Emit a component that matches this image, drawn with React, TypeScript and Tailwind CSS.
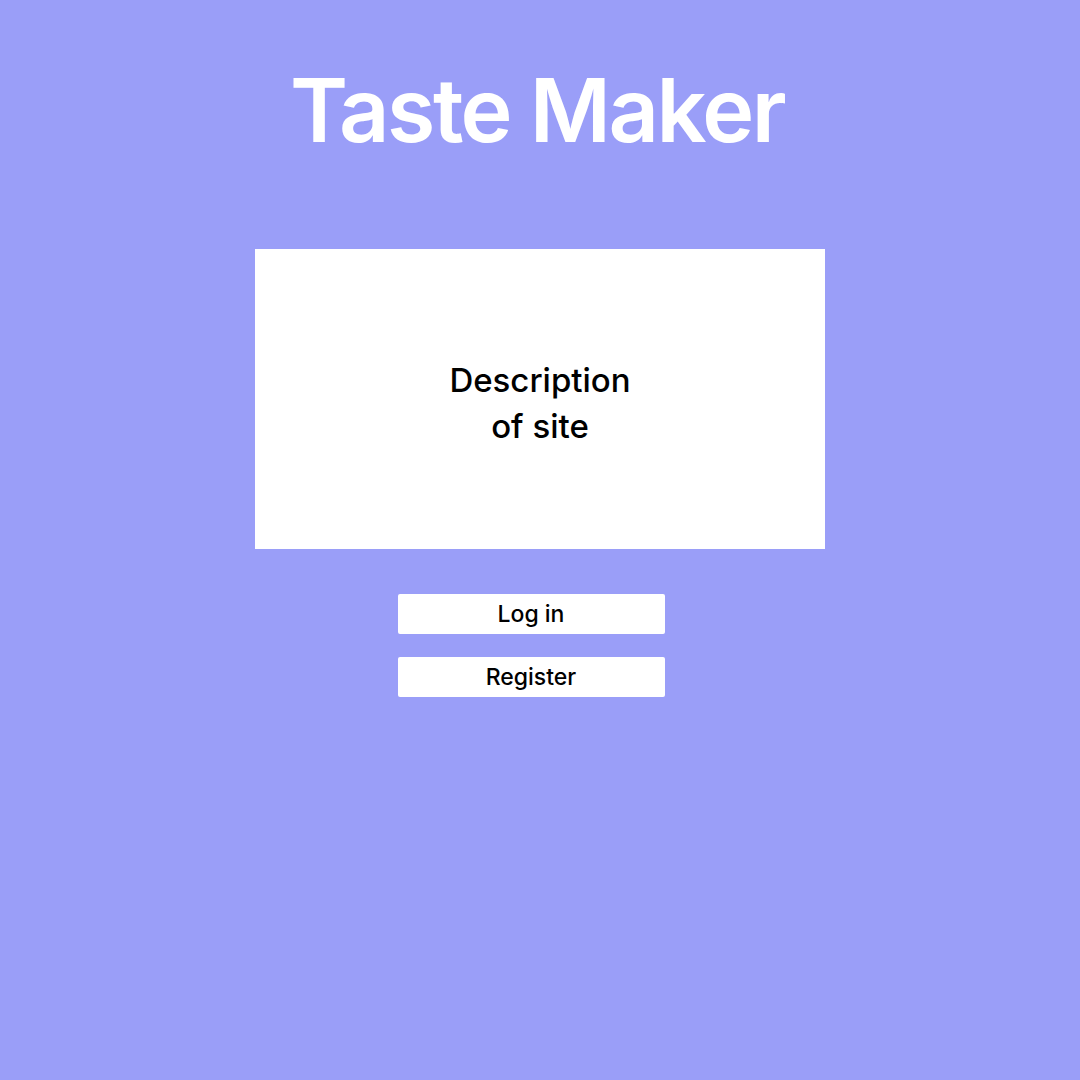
export default function App() {
  return (
    <div
      className="w-[1080px] h-[1080px] bg-[#9a9ef8] flex flex-col items-center"
      style={{ fontFamily: "Inter, 'Noto Sans', sans-serif" }}
    >
      <h1 className="mt-[66px] text-[88px] leading-none font-semibold text-white tracking-[-2.5px] ml-[-6px]">
        Taste Maker
      </h1>
      <div className="mt-[95px] w-[570px] h-[300px] bg-white flex items-center justify-center">
        <p className="text-[33px] leading-[46px] font-medium text-black text-center mt-[8px]">
          Description
          <br />
          of site
        </p>
      </div>
      <div className="mt-[45px] ml-[-18px] flex flex-col gap-[23px]">
        <button className="w-[267px] h-[40px] bg-white rounded-[2px] text-[23px] font-medium text-black">
          Log in
        </button>
        <button className="w-[267px] h-[40px] bg-white rounded-[2px] text-[23px] font-medium text-black">
          Register
        </button>
      </div>
    </div>
  );
}
